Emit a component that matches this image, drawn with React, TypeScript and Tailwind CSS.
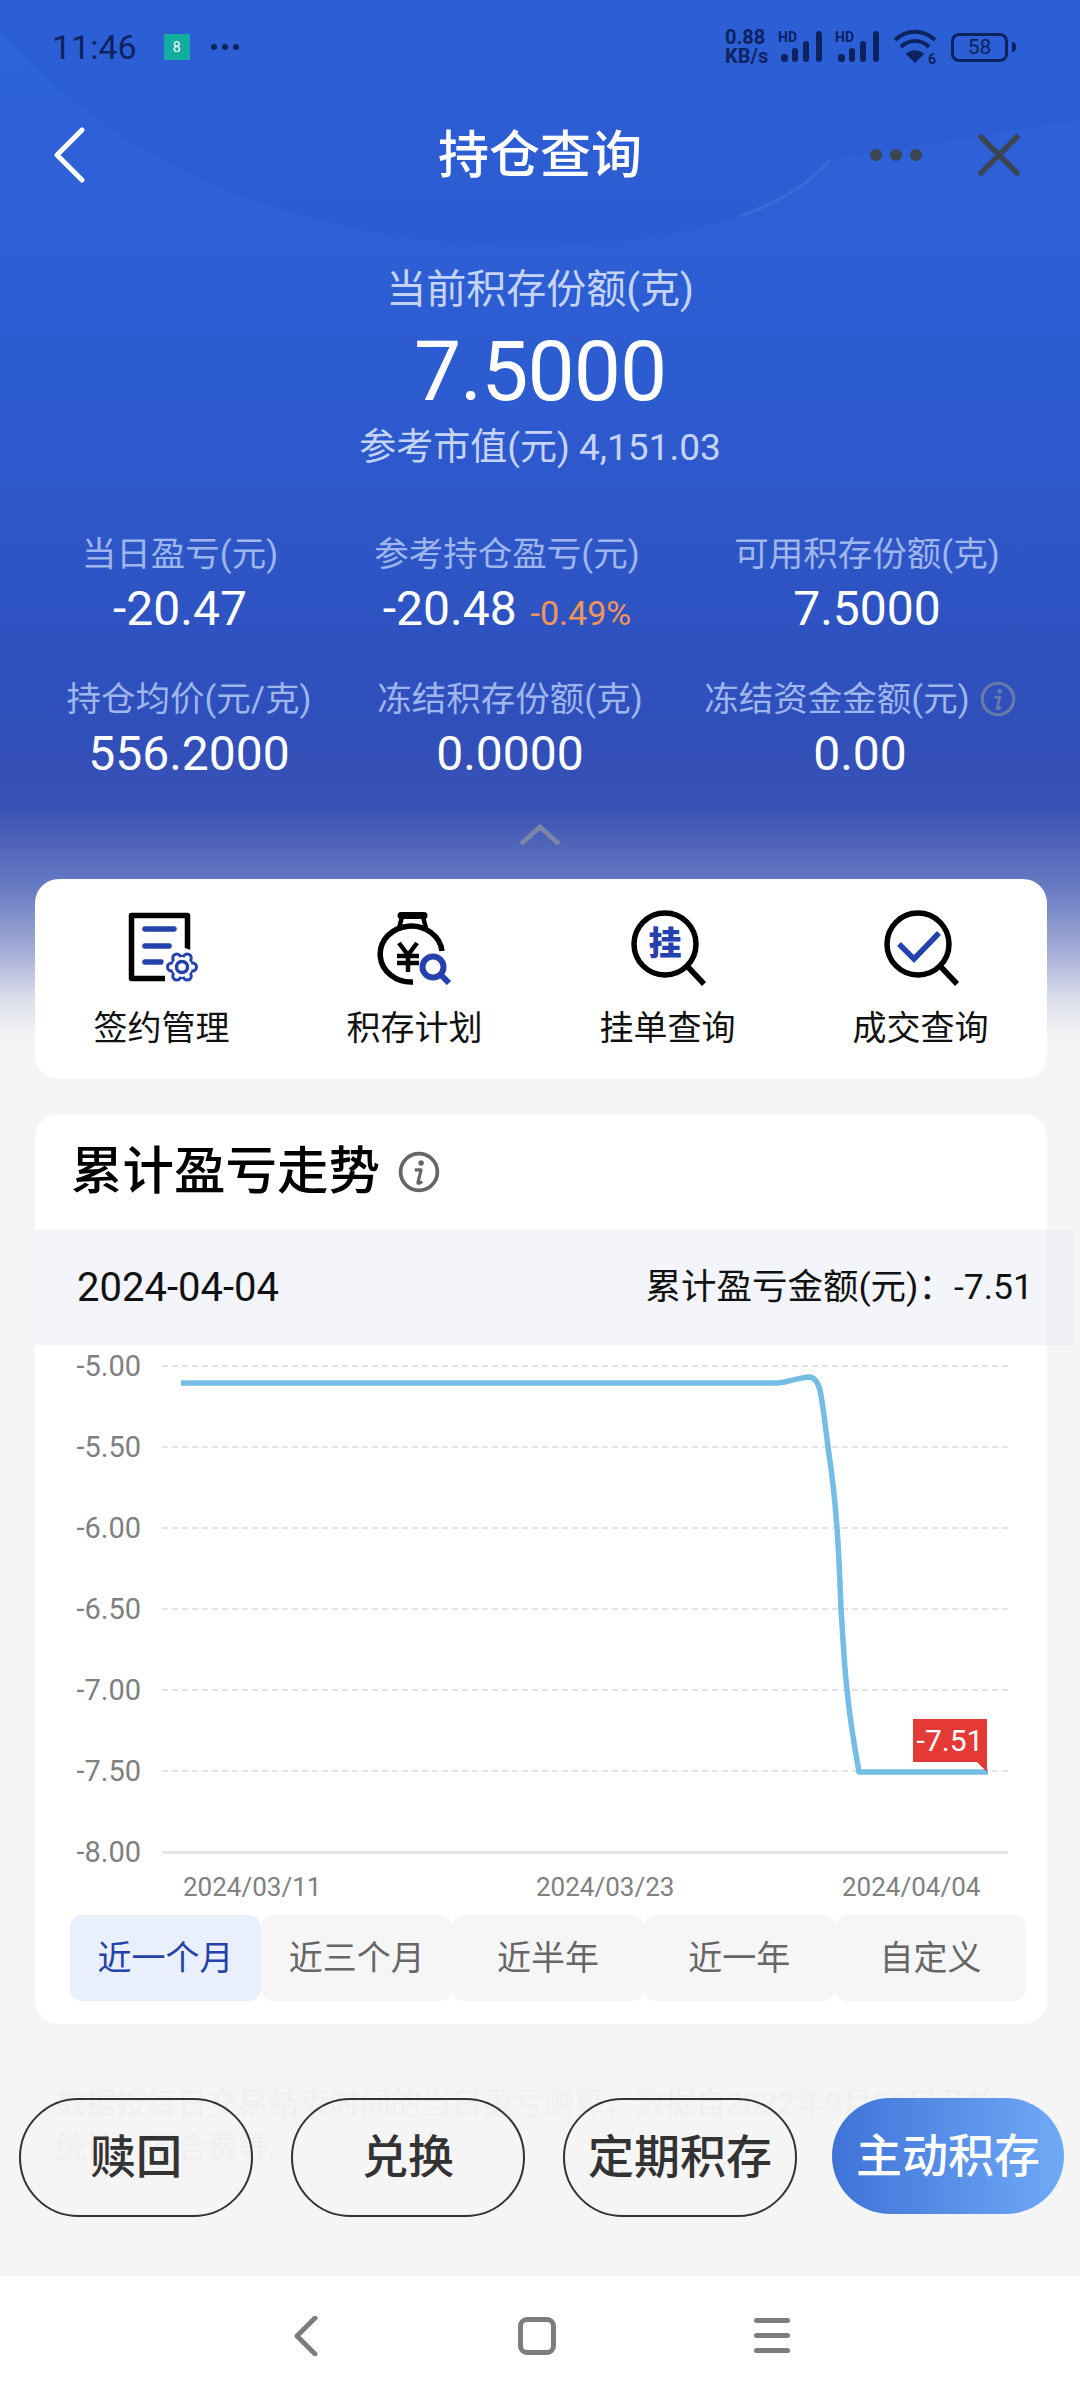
const metrics = [
  [
    { label: '当日盈亏(元)', value: '-20.47', shift: 'pr-[10px]' },
    { label: '参考持仓盈亏(元)', value: '-20.48', extra: '-0.49%', shift: '' },
    { label: '可用积存份额(克)', value: '7.5000', shift: 'pl-[14px]' },
  ],
  [
    { label: '持仓均价(元/克)', value: '556.2000', shift: 'pl-[8px]' },
    { label: '冻结积存份额(克)', value: '0.0000', shift: 'pl-[6px]' },
    { label: '冻结资金金额(元)', value: '0.00', info: true, shift: '' },
  ],
];

const yLabels = ['-5.00', '-5.50', '-6.00', '-6.50', '-7.00', '-7.50', '-8.00'];
const tabs = ['近一个月', '近三个月', '近半年', '近一年', '自定义'];
const buttons = ['赎回', '兑换', '定期积存'];
const gearAngles = [0, 60, 120, 180, 240, 300];

const SignalBars = () => (
  <div className="relative h-[34px] w-[47px]">
    <span className="absolute left-0 top-0 text-[14px] font-bold leading-none text-[#0c2360]">HD</span>
    <svg width="47" height="34" viewBox="0 0 47 34" className="absolute left-0 top-0">
      <g fill="#0c2360">
        <rect x="3" y="24" width="7" height="8" rx="3" />
        <rect x="14" y="18" width="6" height="14" rx="3" />
        <rect x="25" y="11" width="6" height="21" rx="3" />
        <rect x="38" y="1" width="6" height="31" rx="3" />
      </g>
    </svg>
  </div>
);

const DocIcon = () => (
  <svg width="80" height="76" viewBox="0 0 80 76">
    <path d="M43 69.500H9.500V6.500H65.500V44" fill="none" stroke="#000" strokeWidth="5.500" strokeLinejoin="round" />
    <g stroke="#2541ad" strokeWidth="5.500" strokeLinecap="round">
      <path d="M23 20h29" />
      <path d="M23 37h24" />
      <path d="M23 53h16" />
    </g>
    <circle cx="60" cy="58" r="19" fill="#fff" />
    <g fill="#2541ad">
      <circle cx="60" cy="58" r="12" />
      {gearAngles.map((a) => (
        <circle key={a} cx={60 + 10.5 * Math.cos((a * Math.PI) / 180)} cy={58 + 10.5 * Math.sin((a * Math.PI) / 180)} r="5.5" />
      ))}
    </g>
    <g fill="#fff">
      <circle cx="60" cy="58" r="10" />
      {gearAngles.map((a) => (
        <circle key={a} cx={60 + 10.5 * Math.cos((a * Math.PI) / 180)} cy={58 + 10.5 * Math.sin((a * Math.PI) / 180)} r="2.5" />
      ))}
    </g>
    <circle cx="60" cy="58" r="5.500" fill="none" stroke="#2541ad" strokeWidth="3.500" />
  </svg>
);

const BagIcon = () => (
  <svg width="80" height="76" viewBox="0 0 80 76">
    <path d="M38 73A31 28 0 1 1 67 42" fill="none" stroke="#000" strokeWidth="5.500" />
    <path d="M26 6.500h23" stroke="#000" strokeWidth="7" strokeLinecap="round" />
    <path d="M27 8l-3 11M48 8l3 11" stroke="#000" strokeWidth="4.500" />
    <path d="M24 34l9 12 9-12M22 47h22M22 54h22M33 46v17" fill="none" stroke="#000" strokeWidth="4.500" />
    <circle cx="58" cy="58" r="10.500" fill="#fff" stroke="#2541ad" strokeWidth="6" />
    <path d="M65 65l9 9" stroke="#2541ad" strokeWidth="6" />
  </svg>
);

const LensIcon = ({ children }: { children: React.ReactNode }) => (
  <div className="relative h-[76px] w-[80px]">
    <svg width="80" height="78" viewBox="0 0 80 78" className="absolute left-0 top-0">
      <circle cx="37" cy="35" r="31" fill="none" stroke="#000" strokeWidth="5.500" />
      <path d="M60 58l16 17" stroke="#000" strokeWidth="5.500" />
    </svg>
    {children}
  </div>
);

const InfoIcon = ({ className, color }: { className: string; color: string }) => (
  <svg viewBox="0 0 40 40" className={className}>
    <circle cx="20" cy="20" r="17.500" fill="none" stroke={color} strokeWidth="3.600" />
    <circle cx="22" cy="11.500" r="2.600" fill={color} />
    <path d="M16 18h6l-3 12c0 1 1 1.500 4-1" fill="none" stroke={color} strokeWidth="3" strokeLinejoin="round" />
  </svg>
);

export default function App() {
  return (
    <div className="relative flex h-[2400px] w-[1080px] flex-col overflow-hidden bg-[linear-gradient(to_bottom,#2f64dc_0px,#2d5bd0_400px,#2f4fbb_720px,#3a52b4_810px,#6a7cc2_890px,#a3abd6_950px,#dde0ec_1000px,#f5f5f5_1040px)] font-['Roboto','Noto_Sans_CJK_SC',sans-serif]">
      <svg width="1080" height="260" viewBox="0 0 1080 260" className="absolute left-0 top-0">
        <path
          d="M0 30C140 195 360 250 560 245 690 240 790 210 830 160L1080 120V0H0Z"
          fill="#2856cb"
          fillOpacity="0.3"
        />
        <path d="M740 216C785 200 810 182 830 160" fill="none" stroke="#fff" strokeOpacity="0.08" strokeWidth="3" />
      </svg>

      {/* status bar */}
      <div className="relative flex h-[94px] items-center pl-[52px] pr-[64px]">
        <span className="text-[34px] leading-none text-[#0c2360]">11:46</span>
        <div className="ml-[27px] flex h-[26px] w-[26px] items-center justify-center bg-[#13ad9f] text-[14px] leading-none text-white">
          8
        </div>
        <div className="ml-[21px] flex gap-[5px]">
          <span className="h-[6px] w-[6px] rounded-full bg-[#0c2360]" />
          <span className="h-[6px] w-[6px] rounded-full bg-[#0c2360]" />
          <span className="h-[6px] w-[6px] rounded-full bg-[#0c2360]" />
        </div>
        <div className="ml-auto flex items-center">
          <div className="flex w-[53px] flex-col text-[20px] font-bold leading-[19px] text-[#0c2360]">
            <span>0.88</span>
            <span>KB/s</span>
          </div>
          <SignalBars />
          <div className="ml-[10px]">
            <SignalBars />
          </div>
          <svg width="44" height="36" viewBox="0 0 44 36" className="ml-[11px]">
            <g fill="none" stroke="#0c2360" strokeWidth="4">
              <path d="M2 11c12-11 28-11 40 0" />
              <path d="M8 18c8-8 20-8 28 0" />
            </g>
            <path d="M13 25c5-5 13-5 18 0l-9 9z" fill="#0c2360" />
            <text x="35" y="35" fontSize="14" fontWeight="700" fill="#0c2360">
              6
            </text>
          </svg>
          <div className="ml-[14px] flex h-[29px] w-[57px] items-center justify-center rounded-[8px] border-[3px] border-[#0c2360] text-[21px] leading-none text-[#0c2360]">
            58
          </div>
          <span className="ml-[4px] h-[10px] w-[4px] rounded-r-full bg-[#0c2360]" />
        </div>
      </div>

      {/* nav */}
      <div className="relative flex h-[122px] items-center justify-between pl-[52px] pr-[60px]">
        <svg width="34" height="56" viewBox="0 0 34 56">
          <path d="M30 3L5 28l25 25" fill="none" stroke="#fff" strokeWidth="5" strokeLinecap="round" strokeLinejoin="round" />
        </svg>
        <h1 className="absolute left-0 right-0 text-center text-[51px] font-medium leading-none text-white">持仓查询</h1>
        <div className="flex items-center gap-[56px]">
          <div className="flex gap-[8px]">
            <span className="h-[12px] w-[12px] rounded-full bg-[#3d4452]" />
            <span className="h-[12px] w-[12px] rounded-full bg-[#3d4452]" />
            <span className="h-[12px] w-[12px] rounded-full bg-[#3d4452]" />
          </div>
          <svg width="42" height="42" viewBox="0 0 42 42">
            <path d="M3 3l36 36M39 3L3 39" stroke="#3d4452" strokeWidth="5.500" strokeLinecap="round" />
          </svg>
        </div>
      </div>

      {/* hero */}
      <div className="relative flex flex-col items-center">
        <div className="mt-[50px] text-[40px] leading-[48px] text-[#c5d4f6]">当前积存份额(克)</div>
        <div className="mt-[8px] text-[84px] leading-[100px] tracking-[-1px] text-white">7.5000</div>
        <div className="mt-[2px] text-[37px] leading-[48px] text-[#c5d4f6]">参考市值(元) 4,151.03</div>
      </div>

      {/* metrics */}
      <div className="relative mt-[61px] flex flex-col gap-[43px] pl-[30px]">
        {metrics.map((row, i) => (
          <div key={i} className="grid grid-cols-[310px_334px_372px]">
            {row.map((m) => (
              <div key={m.label} className={`flex flex-col items-center ${m.shift}`}>
                <div className="flex items-center gap-[10px] text-[34.5px] leading-[42px] text-[#9fb6ec]">
                  {m.label}
                  {m.info && <InfoIcon className="h-[36px] w-[36px]" color="#6a7aa8" />}
                </div>
                <div className="mt-[8px] flex items-baseline gap-[14px] text-[48px] leading-[52px] text-white">
                  {m.value}
                  {m.extra && <span className="text-[34px] leading-none text-[#f0965a]">{m.extra}</span>}
                </div>
              </div>
            ))}
          </div>
        ))}
      </div>

      <svg width="44" height="24" viewBox="0 0 44 24" className="relative mx-auto mt-[43px]">
        <path d="M3 21L22 4l19 17" fill="none" stroke="#7b85a6" strokeWidth="5" />
      </svg>

      {/* quick entries */}
      <div className="relative ml-[35px] mr-[33px] mt-[32px] flex h-[200px] rounded-[24px] bg-white">
        {[
          { name: '签约管理', icon: <DocIcon /> },
          { name: '积存计划', icon: <BagIcon /> },
          {
            name: '挂单查询',
            icon: (
              <LensIcon>
                <span className="absolute left-[21px] top-[18px] text-[33px] font-black leading-none text-[#2541ad]">挂</span>
              </LensIcon>
            ),
          },
          {
            name: '成交查询',
            icon: (
              <LensIcon>
                <svg width="80" height="76" viewBox="0 0 80 76" className="absolute left-0 top-0">
                  <path d="M18 35l15 15 25-26" fill="none" stroke="#2541ad" strokeWidth="5.500" />
                </svg>
              </LensIcon>
            ),
          },
        ].map((item) => (
          <div key={item.name} className="flex w-[253px] flex-col items-center pt-[30px]">
            <div className="flex h-[76px] items-center">{item.icon}</div>
            <div className="mt-[21px] text-[34px] leading-[44px] text-[#111]">{item.name}</div>
          </div>
        ))}
      </div>

      {/* trend card */}
      <div className="relative ml-[35px] mr-[33px] mt-[35px] flex h-[910px] flex-col rounded-[24px] bg-white">
        <div className="flex h-[116px] items-center gap-[18px] pl-[36px]">
          <h2 className="text-[51.5px] font-medium leading-none text-black">累计盈亏走势</h2>
          <InfoIcon className="h-[42px] w-[42px]" color="#666" />
        </div>
        <div className="relative h-[115px] w-[1038px] bg-[#f3f5fa]">
          <div className="flex h-full items-center justify-between pl-[42px] pr-[40px] text-[#111]">
            <span className="text-[40px]">2024-04-04</span>
            <span className="text-[35.5px]">累计盈亏金额(元)：-7.51</span>
          </div>
          <div className="absolute bottom-0 right-0 top-0 w-[26px] bg-[#e9ebf1]/60" />
        </div>

        <div className="relative pt-[20px]">
          <div className="flex flex-col gap-[79px]">
            {yLabels.map((label, i) => (
              <div key={label} className="flex h-[2px] items-center">
                <span className="w-[106px] text-right text-[29px] leading-none text-[#808080]">{label}</span>
                <div
                  className={
                    i === yLabels.length - 1
                      ? 'ml-[21px] w-[846px] border-t-[3px] border-[#e6e6e6]'
                      : 'ml-[21px] w-[846px] border-t-2 border-dashed border-[#e3e3e3]'
                  }
                />
              </div>
            ))}
          </div>
          <svg width="1012" height="520" viewBox="0 0 1012 520" className="absolute left-0 top-0">
            <path
              d="M146 38H742C752 38 760 33 774 32 780 32 783 38 785 45 788 60 790 78 793 102 797 128 800 155 802 183 804 210 805 237 806 264 808 292 809 318 812 345 815 375 820 405 824 427H953"
              fill="none"
              stroke="#74bde4"
              strokeWidth="5.500"
              strokeLinejoin="round"
            />
          </svg>
          <div className="absolute left-[878px] top-[374px] flex h-[43px] w-[74px] items-center justify-center bg-[#e53935] text-[30px] leading-none text-white">
            -7.51
          </div>
          <div className="absolute left-[942px] top-[417px] h-0 w-0 border-l-[10px] border-t-[10px] border-l-transparent border-t-[#e53935]" />

          <div className="mt-[18px] flex pl-[148px] text-[26px] leading-[32px] text-[#808080]">
            <span className="w-[133px]">2024/03/11</span>
            <span className="ml-[220px] w-[141px]">2024/03/23</span>
            <span className="ml-[165px]">2024/04/04</span>
          </div>

          <div className="ml-[35px] mt-[12px] grid w-[956px] grid-cols-5">
            {tabs.map((tab, i) => (
              <div
                key={tab}
                className={
                  i === 0
                    ? 'flex h-[86px] items-center justify-center rounded-[12px] bg-[#e9effc] text-[34px] text-[#2442a8]'
                    : 'flex h-[86px] items-center justify-center rounded-[12px] bg-[#f6f6f6] text-[34px] text-[#666]'
                }
              >
                {tab}
              </div>
            ))}
          </div>
        </div>
      </div>

      {/* footnote, mostly hidden behind the action bar */}
      <div className="relative mt-[58px] px-[55px] text-[30.5px] leading-[44px] text-[#f0f0f0]">
        数据按每日交易结束时间的当日盈亏测算，数据自2022年9月26日开始
        <br />
        统计，不含费等。
      </div>

      {/* action bar */}
      <div className="absolute left-[19px] top-[2098px] flex gap-[38px]">
        {buttons.map((b) => (
          <div
            key={b}
            className="flex h-[119px] w-[234px] items-center justify-center rounded-full border-2 border-[#333] text-[46px] font-medium text-[#333]"
          >
            {b}
          </div>
        ))}
        <div className="-ml-[3px] flex h-[116px] w-[232px] items-center justify-center rounded-full bg-[linear-gradient(to_right,#3f73d8,#70aaf6)] text-[46px] font-medium text-white">
          主动积存
        </div>
      </div>

      {/* system nav */}
      <div className="mt-auto flex h-[124px] items-center justify-center bg-white pb-[5px]">
        <div className="flex w-[500px] items-center justify-between pl-[3px]">
          <svg width="26" height="40" viewBox="0 0 26 40">
            <path d="M22 2L4 20l18 18" fill="none" stroke="#7d7d7d" strokeWidth="5" strokeLinecap="round" strokeLinejoin="round" />
          </svg>
          <div className="h-[38px] w-[38px] rounded-[9px] border-[5px] border-[#7d7d7d]" />
          <div className="flex w-[36px] flex-col gap-[10px]">
            <span className="h-[5px] rounded-full bg-[#7d7d7d]" />
            <span className="h-[5px] rounded-full bg-[#7d7d7d]" />
            <span className="h-[5px] rounded-full bg-[#7d7d7d]" />
          </div>
        </div>
      </div>
    </div>
  );
}
